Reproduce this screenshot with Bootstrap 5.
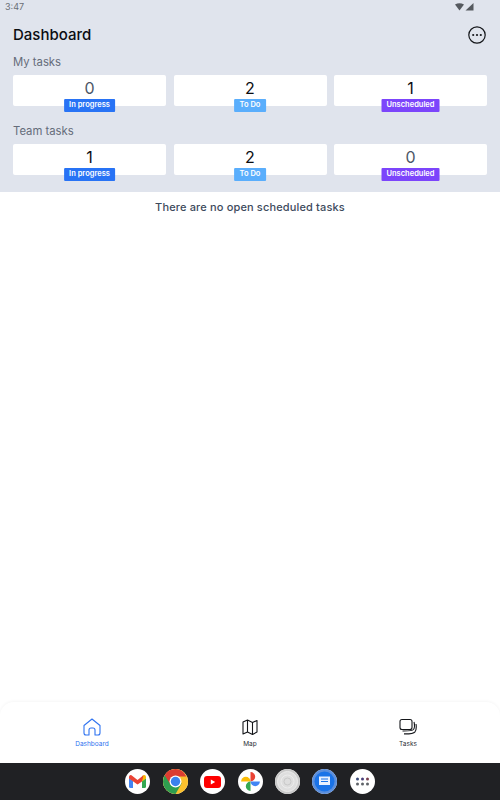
<!DOCTYPE html>
<html>
<head>
    <title>Dashboard</title>
    <meta name="viewport" content="width=device-width, initial-scale=1">
    <link href="https://cdn.jsdelivr.net/npm/bootstrap@5.3.0/dist/css/bootstrap.min.css" rel="stylesheet">
    <style>
        body {
            font-family: Inter, "Liberation Sans", sans-serif;
            background: #fff;
        }
        .app-screen { height: 800px; width: 500px; overflow: hidden; }
        .top-panel { background: #e0e4ed; height: 192px; padding: 0 13px; }
        .status-row { height: 14px; margin: 0 -13px; padding: 1px 26px 0 5px; font-size: 9px; line-height: 12px; color: #6b6f76; }
        .status-icons { margin-top: 2px; }
        .title-row { height: 28px; margin-top: 7px; }
        .page-title { font-size: 15px; font-weight: 500; line-height: 28px; color: #0b0d12; margin: 0; }
        .more-icon { margin-right: 1px; }
        .section-label { font-size: 11.3px; line-height: 16px; color: #656c7a; margin: 0; }
        .first-label { margin-top: 5px; }
        .team-label { margin-top: 17px; }
        .count-row { margin-top: 5px; gap: 7.5px; }
        .count-box { flex: 1 1 0; height: 31px; background: #fff; border-radius: 2px; position: relative; text-align: center; font-size: 16px; line-height: 26px; color: #0b0d12; }
        .count-box.is-zero { color: #4c5667; }
        .state-tag { position: absolute; left: 50%; top: 24px; transform: translateX(-50%); height: 13px; padding: 0 5.5px; border-radius: 1px; font-size: 7.5px; font-weight: 600; line-height: 12px; color: #fff; white-space: nowrap; }
        .tag-progress { background: #2873f5; }
        .tag-todo { background: #5aaefc; }
        .tag-unscheduled { background: #7c45fb; }
        .empty-note { font-size: 11px; font-weight: 500; line-height: 16px; color: #3d4a5c; text-align: center; margin: 7px 0 0; letter-spacing: .15px; }
        .bottom-tabs { height: 61px; padding: 0 13px; background: #fff; border-radius: 14px 14px 0 0; box-shadow: 0 -1px 3px rgba(0, 0, 0, .04); }
        .tab-item { width: 158px; padding-top: 16px; font-size: 6.5px; line-height: 10px; color: #2b2f36; text-align: center; }
        .tab-item svg { display: block; margin: 0 auto 3px; }
        .tab-item.is-active { color: #2f73f0; }
        .system-dock { height: 37px; background: #202124; gap: 12.4px; }
        .dock-icon { width: 25px; height: 25px; border-radius: 50%; background: #fff; flex: none; }
    </style>
</head>
<body>
    <div class="app-screen d-flex flex-column">
        <div class="top-panel">
            <div class="status-row d-flex justify-content-between">
                <span>3:47</span>
                <svg width="19" height="8" viewBox="0 0 19 8" class="status-icons">
                    <path d="M0 1.500Q4.500-1 9 1.500L4.500 7.500Z" fill="#55595f"/>
                    <path d="M18.500 0V7.500H10.500Z" fill="#55595f"/>
                </svg>
            </div>
            <div class="title-row d-flex justify-content-between align-items-center">
                <h1 class="page-title">Dashboard</h1>
                <svg width="18" height="18" viewBox="0 0 18 18" class="more-icon">
                    <circle cx="9" cy="9" r="8.200" fill="none" stroke="#14161a" stroke-width="1.200"/>
                    <circle cx="5.200" cy="9" r="1.100" fill="#14161a"/>
                    <circle cx="9" cy="9" r="1.100" fill="#14161a"/>
                    <circle cx="12.800" cy="9" r="1.100" fill="#14161a"/>
                </svg>
            </div>
            <p class="section-label first-label">My tasks</p>
            <div class="count-row d-flex">
                <div class="count-box is-zero">0<span class="state-tag tag-progress">In progress</span></div>
                <div class="count-box">2<span class="state-tag tag-todo">To Do</span></div>
                <div class="count-box">1<span class="state-tag tag-unscheduled">Unscheduled</span></div>
            </div>
            <p class="section-label team-label">Team tasks</p>
            <div class="count-row d-flex">
                <div class="count-box">1<span class="state-tag tag-progress">In progress</span></div>
                <div class="count-box">2<span class="state-tag tag-todo">To Do</span></div>
                <div class="count-box is-zero">0<span class="state-tag tag-unscheduled">Unscheduled</span></div>
            </div>
        </div>

        <div class="flex-grow-1">
            <p class="empty-note">There are no open scheduled tasks</p>
        </div>

        <nav class="bottom-tabs d-flex justify-content-between">
            <div class="tab-item is-active">
                <svg width="18" height="18" viewBox="0 0 18 18" fill="none" stroke="#2f73f0" stroke-width="1.100" stroke-linejoin="round">
                    <path d="M1 7.500L9 1l8 6.500V15a2 2 0 0 1-2 2h-3v-5a2 2 0 0 0-2-2H8a2 2 0 0 0-2 2v5H3a2 2 0 0 1-2-2Z"/>
                </svg>
                Dashboard
            </div>
            <div class="tab-item">
                <svg width="18" height="18" viewBox="0 0 18 18" fill="none" stroke="#14161a" stroke-width="1.100" stroke-linejoin="round">
                    <path d="M2 4L6.500 2l5 2.500L16 2.500V14l-4.500 2.500-5-2.500L2 16Z"/>
                    <path d="M6.500 2v12M11.500 4.500v12"/>
                </svg>
                Map
            </div>
            <div class="tab-item">
                <svg width="18" height="18" viewBox="0 0 18 18" fill="none" stroke="#14161a" stroke-width="1.100">
                    <rect x="1" y="1.500" width="12" height="10" rx="2"/>
                    <path d="M15 4c.8 3 .6 6-.5 7.500-1 1.300-3 1.600-11 1.500"/>
                    <path d="M17 6c.5 3 .2 6-1 7.800-1.200 1.600-4 2.200-11 2.100"/>
                </svg>
                Tasks
            </div>
        </nav>

        <div class="system-dock d-flex justify-content-center align-items-center">
            <div class="dock-icon d-flex align-items-center justify-content-center">
                <svg width="17" height="13" viewBox="0 0 17 13">
                    <path d="M0 3V11.500Q0 13 1.500 13H4V6Z" fill="#4285f4"/>
                    <path d="M17 3V11.500Q17 13 15.500 13H13V6Z" fill="#34a853"/>
                    <path d="M13 1V6.500L17 3.500V1.800Q16.700-.5 14.500.2Z" fill="#fbbc04"/>
                    <path d="M0 3.500V1.800Q.3-.5 2.500.2L8.500 5 14.500.2 13 6.500 8.500 9.500 0 3.500Z" fill="#ea4335"/>
                </svg>
            </div>
            <div class="dock-icon d-flex align-items-center justify-content-center">
                <svg width="25" height="25" viewBox="0 0 25 25">
                    <circle cx="12.500" cy="12.500" r="12.500" fill="#fbc02d"/>
                    <path d="M12.500 12.500L1.700 6.250A12.500 12.500 0 0 0 12.500 25L18.750 14.200Z" fill="#2e9e4f"/>
                    <path d="M12.500 0A12.500 12.500 0 0 0 1.700 6.250L7.500 15.500 12.500 7.500H23.300A12.500 12.500 0 0 0 12.500 0Z" fill="#dc3d32"/>
                    <circle cx="12.500" cy="12.500" r="6" fill="#fff"/>
                    <circle cx="12.500" cy="12.500" r="4.700" fill="#3b82ee"/>
                </svg>
            </div>
            <div class="dock-icon d-flex align-items-center justify-content-center">
                <svg width="17" height="12" viewBox="0 0 17 12">
                    <rect width="17" height="12" rx="3" fill="#f00"/>
                    <path d="M6.800 3.400L11.200 6 6.800 8.600Z" fill="#fff"/>
                </svg>
            </div>
            <div class="dock-icon d-flex align-items-center justify-content-center">
                <svg width="19" height="19" viewBox="0 0 19 19">
                    <path d="M.1 9.500A4.700 4.700 0 0 1 9.500 9.500Z" fill="#fbbc04"/>
                    <path d="M9.500.1A4.700 4.700 0 0 1 9.500 9.500Z" fill="#ea4335"/>
                    <path d="M9.500 9.500A4.700 4.700 0 0 0 18.900 9.500Z" fill="#4285f4"/>
                    <path d="M9.500 9.500A4.700 4.700 0 0 0 9.500 18.900Z" fill="#34a853"/>
                </svg>
            </div>
            <div class="dock-icon d-flex align-items-center justify-content-center">
                <svg width="25" height="25" viewBox="0 0 25 25">
                    <circle cx="12.500" cy="12.500" r="12.500" fill="#c9c9c9"/>
                    <circle cx="12.500" cy="12.500" r="10" fill="#dedede" stroke="#ececec"/>
                    <circle cx="12.500" cy="12.500" r="6.500" fill="none" stroke="#ececec"/>
                    <circle cx="12.500" cy="12.500" r="3.500" fill="none" stroke="#c9c9c9"/>
                </svg>
            </div>
            <div class="dock-icon d-flex align-items-center justify-content-center">
                <svg width="25" height="25" viewBox="0 0 25 25">
                    <circle cx="12.500" cy="12.500" r="12.500" fill="#5c8fdc"/>
                    <circle cx="12.500" cy="12.500" r="10" fill="#1a73e8"/>
                    <path d="M7 7.500H18V16H7Z" fill="#e8f0fe"/>
                    <path d="M9 10H16M9 12.500H16" stroke="#1a73e8"/>
                </svg>
            </div>
            <div class="dock-icon d-flex align-items-center justify-content-center">
                <svg width="15" height="9" viewBox="0 0 15 9">
                    <circle cx="2.500" cy="2" r="1.500" fill="#3c4a7a"/>
                    <circle cx="7.500" cy="2" r="1.500" fill="#4a3f7a"/>
                    <circle cx="12.500" cy="2" r="1.500" fill="#7a3f4f"/>
                    <circle cx="2.500" cy="7" r="1.500" fill="#5f6368"/>
                    <circle cx="7.500" cy="7" r="1.500" fill="#5f6368"/>
                    <circle cx="12.500" cy="7" r="1.500" fill="#5f6368"/>
                </svg>
            </div>
        </div>
    </div>

    <script src="https://cdn.jsdelivr.net/npm/bootstrap@5.3.0/dist/js/bootstrap.bundle.min.js"></script>
</body>
</html>
